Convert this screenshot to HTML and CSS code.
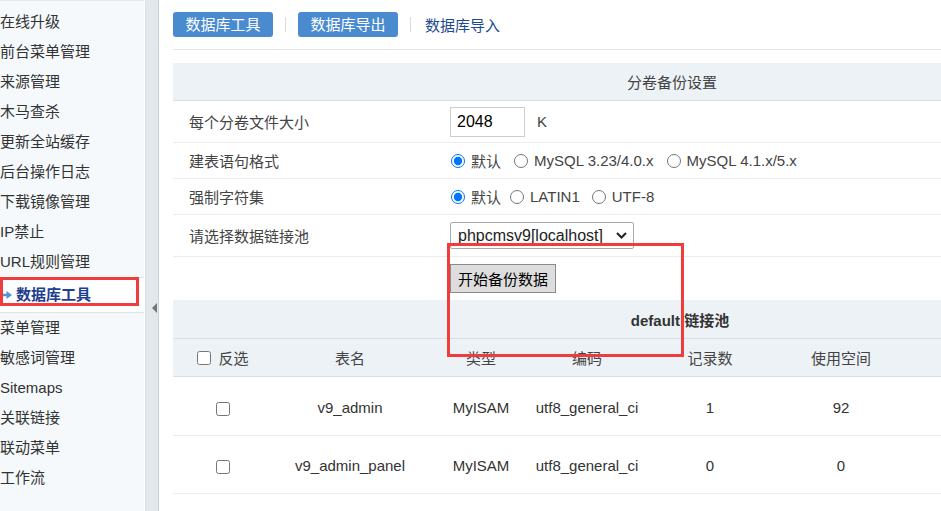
FILE: index.html
```html
<!DOCTYPE html>
<html lang="zh-CN">
<head>
<meta charset="utf-8">
<title>数据库工具</title>
<link rel="stylesheet" href="styles.css">
</head>
<body>
<div class="layout">
  <nav class="sidebar">
    <ul class="menu">
      <li>在线升级</li>
      <li>前台菜单管理</li>
      <li>来源管理</li>
      <li>木马查杀</li>
      <li>更新全站缓存</li>
      <li>后台操作日志</li>
      <li>下载镜像管理</li>
      <li>IP禁止</li>
      <li>URL规则管理</li>
      <li class="active"><svg class="arrow" width="12" height="8" viewBox="0 0 12 8"><path d="M0 2.8h6.5V0L12 4 6.5 8V5.2H0z" fill="#5b8fd6"/></svg><span>数据库工具</span></li>
      <li>菜单管理</li>
      <li>敏感词管理</li>
      <li>Sitemaps</li>
      <li>关联链接</li>
      <li>联动菜单</li>
      <li>工作流</li>
    </ul>
  </nav>
  <div class="splitter"><span class="tri"></span></div>
  <main class="main">
    <div class="tabs">
      <a class="btn">数据库工具</a>
      <span class="sep"></span>
      <a class="btn">数据库导出</a>
      <span class="sep"></span>
      <a class="link">数据库导入</a>
    </div>
    <div class="rule"></div>

    <section class="panel">
      <div class="panel-head">分卷备份设置</div>
      <div class="frow h42">
        <div class="label">每个分卷文件大小</div>
        <div class="value"><input class="num" type="text" value="2048"><span>K</span></div>
      </div>
      <div class="frow h36">
        <div class="label">建表语句格式</div>
        <div class="value opts">
          <label class="opt"><input type="radio" name="fmt" checked>默认</label>
          <label class="opt"><input type="radio" name="fmt">MySQL 3.23/4.0.x</label>
          <label class="opt"><input type="radio" name="fmt">MySQL 4.1.x/5.x</label>
        </div>
      </div>
      <div class="frow h36">
        <div class="label">强制字符集</div>
        <div class="value opts">
          <label class="opt tight"><input type="radio" name="cs" checked>默认</label>
          <label class="opt wide"><input type="radio" name="cs">LATIN1</label>
          <label class="opt"><input type="radio" name="cs">UTF-8</label>
        </div>
      </div>
      <div class="frow h42">
        <div class="label">请选择数据链接池</div>
        <div class="value">
          <div class="select"><span>phpcmsv9[localhost]</span><svg width="11" height="7" viewBox="0 0 11 7"><path d="M1 1l4.5 4.5L10 1" fill="none" stroke="#222" stroke-width="2"/></svg></div>
        </div>
      </div>
      <div class="frow h43 last">
        <div class="label"></div>
        <div class="value"><button class="go" type="button">开始备份数据</button></div>
      </div>
    </section>

    <section class="list">
      <div class="list-head">default 链接池</div>
      <div class="lrow th">
        <div><label class="sel"><input type="checkbox">反选</label></div>
        <div>表名</div>
        <div>类型</div>
        <div>编码</div>
        <div>记录数</div>
        <div>使用空间</div>
        <div></div>
      </div>
      <div class="lrow td r59">
        <div><input type="checkbox"></div>
        <div>v9_admin</div>
        <div>MyISAM</div>
        <div>utf8_general_ci</div>
        <div>1</div>
        <div>92</div>
        <div></div>
      </div>
      <div class="lrow td r58">
        <div><input type="checkbox"></div>
        <div>v9_admin_panel</div>
        <div>MyISAM</div>
        <div>utf8_general_ci</div>
        <div>0</div>
        <div>0</div>
        <div></div>
      </div>
    </section>

    <div class="mark"></div>
  </main>
</div>
</body>
</html>
```

FILE: styles.css
```css
*, *::before, *::after { box-sizing: border-box; }
html, body { margin: 0; height: 100%; overflow: hidden; }
body {
  font-family: "Liberation Sans", "Noto Sans CJK SC", sans-serif;
  font-size: 15px;
  color: #333;
  background: #fff;
}

.layout { display: flex; height: 511px; }

/* sidebar */
.sidebar {
  width: 145px;
  flex: none;
  background: #f5f9fb;
  border-top: 1px solid #e3e9ec;
  border-right: 1px solid #ffffff;
  padding-top: 6px;
}
.menu { list-style: none; margin: 0; padding: 0; }
.menu li {
  height: 30px;
  line-height: 30px;
  white-space: nowrap;
  color: #333;
}
.menu li.active {
  position: relative;
  height: 36px;
  line-height: 34px;
  border-top: 1px solid #dde4e8;
  border-bottom: 1px solid #dde4e8;
  background: #fdfeff;
  font-weight: bold;
  color: #1d3f8c;
  display: flex;
  align-items: center;
  gap: 4px;
}
.menu li.active::after {
  content: "";
  position: absolute;
  left: 0;
  top: -1px;
  width: 139px;
  height: 29px;
  border: 3px solid #f03c3c;
}
.arrow { flex: none; }

/* splitter */
.splitter {
  position: relative;
  width: 14px;
  flex: none;
  background: #e2e8eb;
  border-left: 1px solid #dbe2e6;
  border-right: 1px solid #c9d2d8;
}
.tri {
  position: absolute;
  left: 6px;
  top: 303px;
  width: 0;
  height: 0;
  border-top: 5px solid transparent;
  border-bottom: 5px solid transparent;
  border-right: 5px solid #767676;
}

/* main */
.main {
  position: relative;
  flex: 1;
  min-width: 0;
  overflow: hidden;
  padding: 12px 0 0 14px;
}
.tabs { display: flex; align-items: center; height: 25px; }
.btn {
  width: 100px;
  height: 25px;
  line-height: 25px;
  text-align: center;
  background: #4a8bd0;
  color: #fff;
  border-radius: 3px;
}
.sep {
  width: 1px;
  height: 15px;
  background: #e2d8d8;
  margin: 0 12px;
}
.link { color: #1d4b8e; padding-left: 2px; }
.rule { height: 1px; background: #e4e4e4; margin-top: 12px; width: 1100px; }

/* settings panel */
.panel { width: 998px; margin-top: 13px; }
.panel-head {
  height: 38px;
  background: #edf2f6;
  border-bottom: 1px solid #d5dfe8;
  display: flex;
  align-items: center;
  justify-content: center;
  color: #444;
}
.frow {
  display: grid;
  grid-template-columns: 277px 1fr;
  align-items: center;
  border-bottom: 1px solid #ececec;
}
.frow.h42 { height: 42px; }
.frow.h36 { height: 36px; }
.frow.h43 { height: 43px; }
.frow.last { border-bottom: none; }
.label { padding-left: 16px; color: #444; }
.value { display: flex; align-items: center; color: #444; }

.num {
  width: 75px;
  height: 30px;
  border: 1px solid #cdcdcd;
  padding: 0 6px;
  font-family: "Liberation Sans", sans-serif;
  font-size: 16px;
  color: #000;
  margin: 0 12px 0 0;
}

.opts { padding-left: 1px; }
.opt { display: flex; align-items: center; margin-right: 13px; }
.opt.tight { margin-right: 9px; }
.opt.wide { margin-right: 12px; }
.opt input {
  width: 14px;
  height: 14px;
  margin: 0 6px 0 0;
}

.select {
  width: 184px;
  height: 27px;
  border: 1px solid #a9a9a9;
  border-radius: 2px;
  display: flex;
  align-items: center;
  justify-content: space-between;
  padding: 0 6px 0 7px;
  font-size: 16px;
  color: #222;
  background: #fff;
}

.go {
  height: 29px;
  width: 106px;
  padding: 0;
  background: #dddddd;
  border: 1px solid #8b8b8b;
  font-family: "Liberation Sans", "Noto Sans CJK SC", sans-serif;
  font-size: 15px;
  color: #000;
}

/* list */
.list { width: 1014px; }
.list-head {
  height: 39px;
  background: #edf2f6;
  border-bottom: 1px solid #d5dfe8;
  display: flex;
  align-items: center;
  justify-content: center;
  font-weight: bold;
  color: #333;
}
.lrow {
  display: grid;
  grid-template-columns: 100px 154px 108px 104px 142px 120px 286px;
  align-items: center;
  text-align: center;
}
.lrow.th {
  height: 38px;
  background: #edf2f6;
  border-bottom: 1px solid #d5dfe8;
  color: #444;
}
.lrow.td {
  border-bottom: 1px solid #ececec;
  color: #333;
  padding-top: 2px;
}
.lrow.r59 { height: 59px; }
.lrow.r58 { height: 58px; }
.lrow input[type="checkbox"] {
  width: 14px;
  height: 14px;
  margin: 0;
  vertical-align: middle;
}
.sel { display: inline-flex; align-items: center; gap: 7px; }

.mark {
  position: absolute;
  left: 288px;
  top: 243px;
  width: 237px;
  height: 114px;
  border: 3px solid #f03c3c;
}
```
